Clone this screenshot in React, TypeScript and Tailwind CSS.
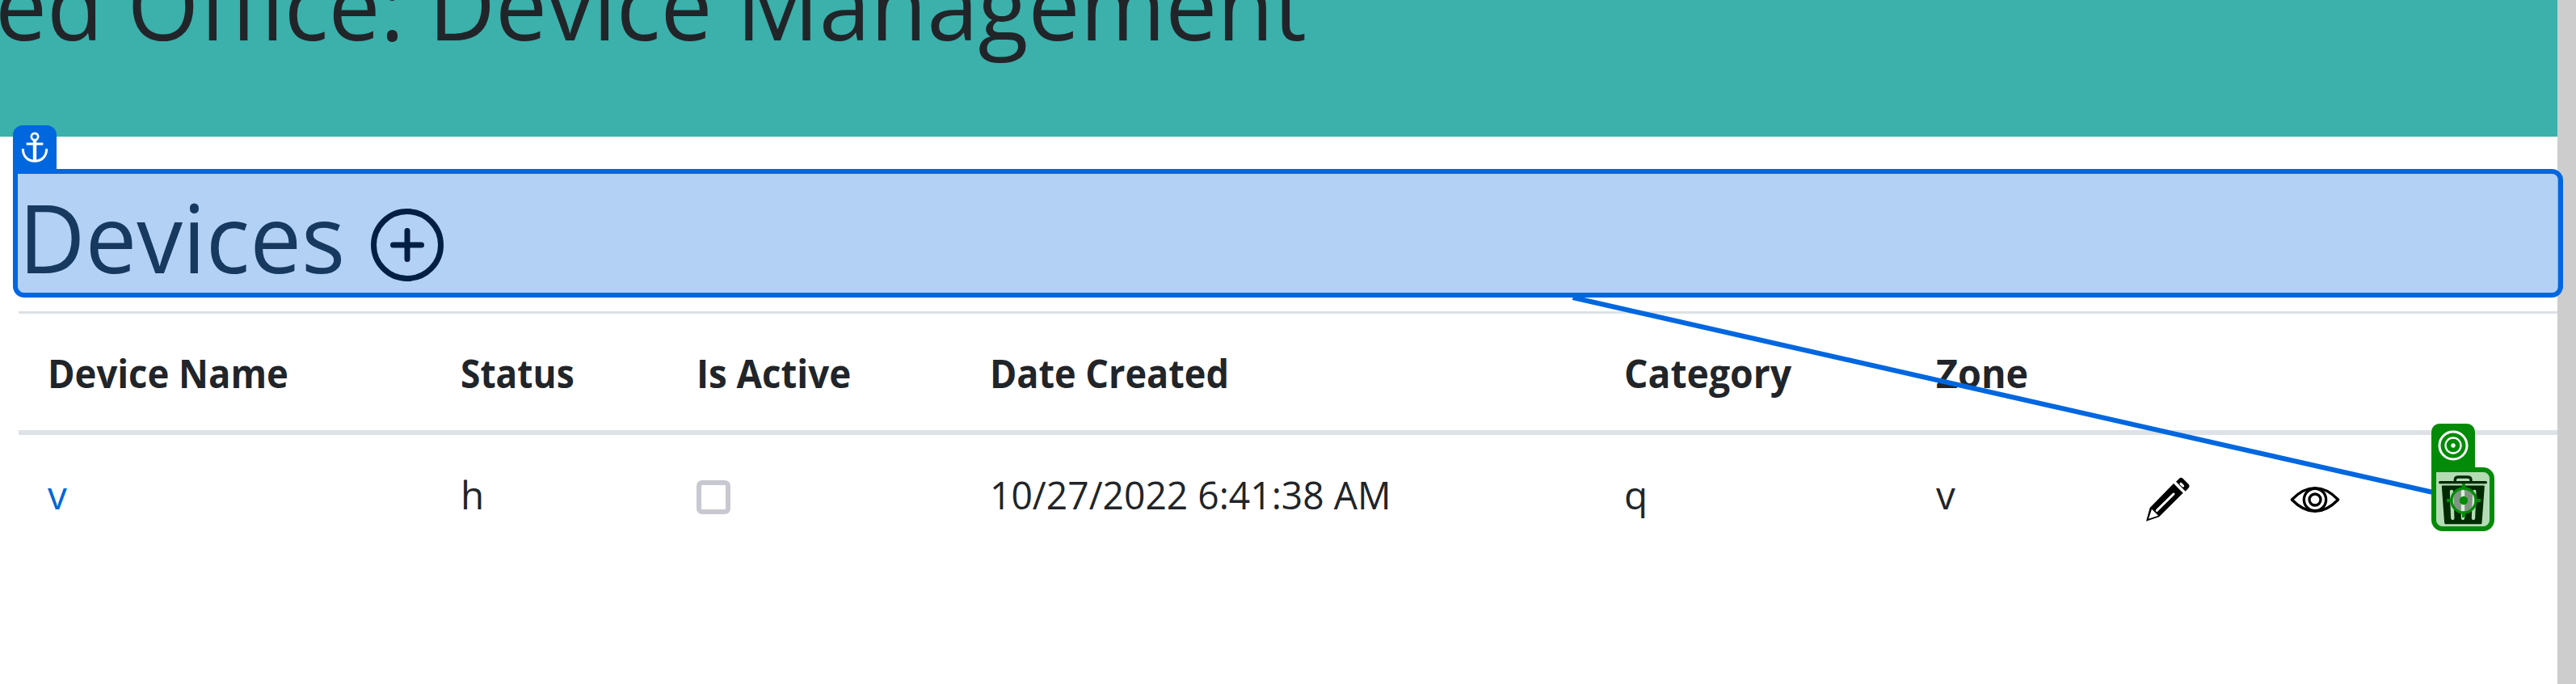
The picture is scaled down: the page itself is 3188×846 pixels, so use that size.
const columns = [
  { label: "Device Name", fit: "scale-x-[95.4%]" },
  { label: "Status", fit: "scale-x-[93%]" },
  { label: "Is Active", fit: "scale-x-[95.8%]" },
  { label: "Date Created", fit: "scale-x-[94.6%]" },
  { label: "Category", fit: "scale-x-[97.3%]" },
  { label: "Zone", fit: "scale-x-[98%]" },
];

const grid = "grid grid-cols-[511px_292px_363px_785px_386px_260px_178px_178px_189px]";

function PlusCircle() {
  return (
    <svg className="size-[92px]" viewBox="0 0 92 92" fill="none" stroke="#000" strokeWidth="7" strokeLinecap="round">
      <circle cx="46" cy="46" r="41.5" />
      <path d="M46 28.500V63.500M28.500 46H63.500" />
    </svg>
  );
}

function Anchor() {
  return (
    <svg className="block h-[54px] w-[54px]" viewBox="0 0 162 162" fill="none" stroke="#fff">
      <circle cx="81" cy="42" r="12.500" strokeWidth="8" />
      <path d="M81 54V134" strokeWidth="13" />
      <path d="M50 69H112" strokeWidth="9" />
      <path d="M37 87C37 117 57 133 81 133S125 117 125 87" strokeWidth="9" />
    </svg>
  );
}

function Pencil() {
  return (
    <svg className="size-20" viewBox="0 0 240 240">
      <path d="M150 54L185 89L96 178L48 194L62 144Z" />
      <path d="M69 149L93 173L57 185Z" fill="#fff" />
      <path d="M88 154L150 93" stroke="#fff" strokeWidth="9" strokeLinecap="round" />
      <path d="M159 47L173 34Q178 30 184 35L206 57Q211 63 207 69L194 83Z" />
      <path d="M177 55L185 63" stroke="#fff" strokeWidth="9" strokeLinecap="round" />
    </svg>
  );
}

function Eye() {
  return (
    <svg className="size-20" viewBox="0 0 240 240" fill="none" stroke="#000" strokeWidth="10" strokeLinejoin="round">
      <path d="M34 114Q76 71 120 71T206 114Q164 157 120 157T34 114Z" />
      <circle cx="120" cy="114" r="41" />
      <circle cx="120" cy="114" r="21" />
    </svg>
  );
}

function Trash() {
  return (
    <svg className="h-[64px] w-[62px]" viewBox="111 257 186 192" fill="none" strokeLinecap="round" strokeLinejoin="round">
      <path d="M119 289H289" stroke="#000" strokeWidth="10" />
      <path d="M175 286V278Q176 269 187 269H221Q233 269 234 278V286" stroke="#000" strokeWidth="10" />
      <path d="M129 304H281L271 440H139Z" fill="#000" stroke="#000" strokeWidth="7" />
      <path d="M162 323L166 422M204 323V422M247 323L243 422" stroke="#fff" strokeWidth="13" />
    </svg>
  );
}

function Target() {
  return (
    <svg className="block h-[54px] w-[54px]" viewBox="0 0 162 162" fill="none" stroke="#fff">
      <circle cx="81" cy="81" r="51" strokeWidth="9" />
      <circle cx="81" cy="81" r="28.500" strokeWidth="7" />
      <circle cx="81" cy="81" r="8" fill="#fff" stroke="none" />
    </svg>
  );
}

function Crosshair() {
  return (
    <svg className="block h-[67px] w-[66px]" viewBox="105 252 198 201" fill="none" stroke="#038a08">
      <circle cx="207" cy="357" r="45" fill="#fff" fillOpacity="0.5" strokeWidth="10" />
      <circle cx="207" cy="357" r="15.500" fill="#038a08" stroke="none" />
      <path d="M207 294V312M207 402V420M144 357H162M252 357H270" strokeWidth="12" />
    </svg>
  );
}

export default function App() {
  return (
    <div className="relative flex h-[846px] w-[3188px] overflow-hidden bg-white font-['Open_Sans',sans-serif] text-[#212529]">
      <div className="flex w-[3165px] shrink-0 flex-col">
        <header className="flex h-[169px] items-start overflow-hidden bg-[#3cb0ab]">
          <h1 className="-mt-[79px] -ml-[6px] origin-left scale-x-[96.7%] whitespace-nowrap text-[118px] leading-[168px]">
            ed Office: Device Management
          </h1>
        </header>
        <main className="pl-[23px]">
          <div className="mt-[46px] flex h-[147px]">
            <h2 className="-mt-[6px] w-[435px] origin-left text-[118px] leading-[168px]">
              <span className="inline-block origin-left scale-x-[96.3%]">Devices</span>
            </h2>
            <div className="pt-[42px]"><PlusCircle /></div>
          </div>
          <div className="mt-[23px] border-t-[3px] border-[#dee2e6]">
            <div className={`${grid} h-[150px] items-center border-b-[6px] border-[#dee2e6] pt-[3px] text-[47.600px] leading-[72px] font-bold`}>
              {columns.map((c) => (
                <div key={c.label} className="whitespace-nowrap pl-9">
                  <span className={`inline-block origin-left ${c.fit}`}>{c.label}</span>
                </div>
              ))}
            </div>
            <div className={`${grid} h-[150px] items-center pb-[3px] text-[47.600px] leading-[72px]`}>
              <a className="pl-9 text-[#0067d8]">v</a>
              <div className="pl-9">h</div>
              <div className="pl-9">
                <div className="mt-[7px] size-[42px] rounded-[7px] border-6 border-[#c8c8d0]" />
              </div>
              <div className="whitespace-nowrap pl-9">
                <span className="inline-block origin-left scale-x-[97.1%]">10/27/2022 6:41:38 AM</span>
              </div>
              <div className="pl-9">q</div>
              <div className="pl-9">v</div>
              <div className="mt-[17px] pl-5"><Pencil /></div>
              <div className="mt-[17px] pl-[27px]"><Eye /></div>
              <div className="mt-[13px] pl-[41px]"><Trash /></div>
            </div>
          </div>
        </main>
      </div>
      <div className="flex-1 bg-[#cdcdcd]" />

      <div className="absolute top-[155px] left-4 h-[54px] w-[54px] rounded-t-[12px] bg-[#0067df]"><Anchor /></div>
      <div className="absolute top-[209px] left-4 h-[159px] w-[3156px] rounded-[14px] rounded-tl-none border-6 border-[#0067df] bg-[#0067df]/30 bg-clip-padding" />
      <svg className="absolute top-0 left-0 h-[846px] w-[3188px]" viewBox="0 0 3188 846">
        <path d="M1946.500 368L3010 608.800" stroke="#0067df" strokeWidth="6" />
      </svg>
      <div className="absolute top-[524px] left-[3009px] h-[54px] w-[54px] rounded-t-[10px] bg-[#038a08]"><Target /></div>
      <div className="absolute top-[578px] left-[3009px] h-[79px] w-[78px] rounded-[14px] rounded-tl-none border-6 border-[#038a08] bg-[#038a08]/30 bg-clip-padding"><Crosshair /></div>
    </div>
  );
}
